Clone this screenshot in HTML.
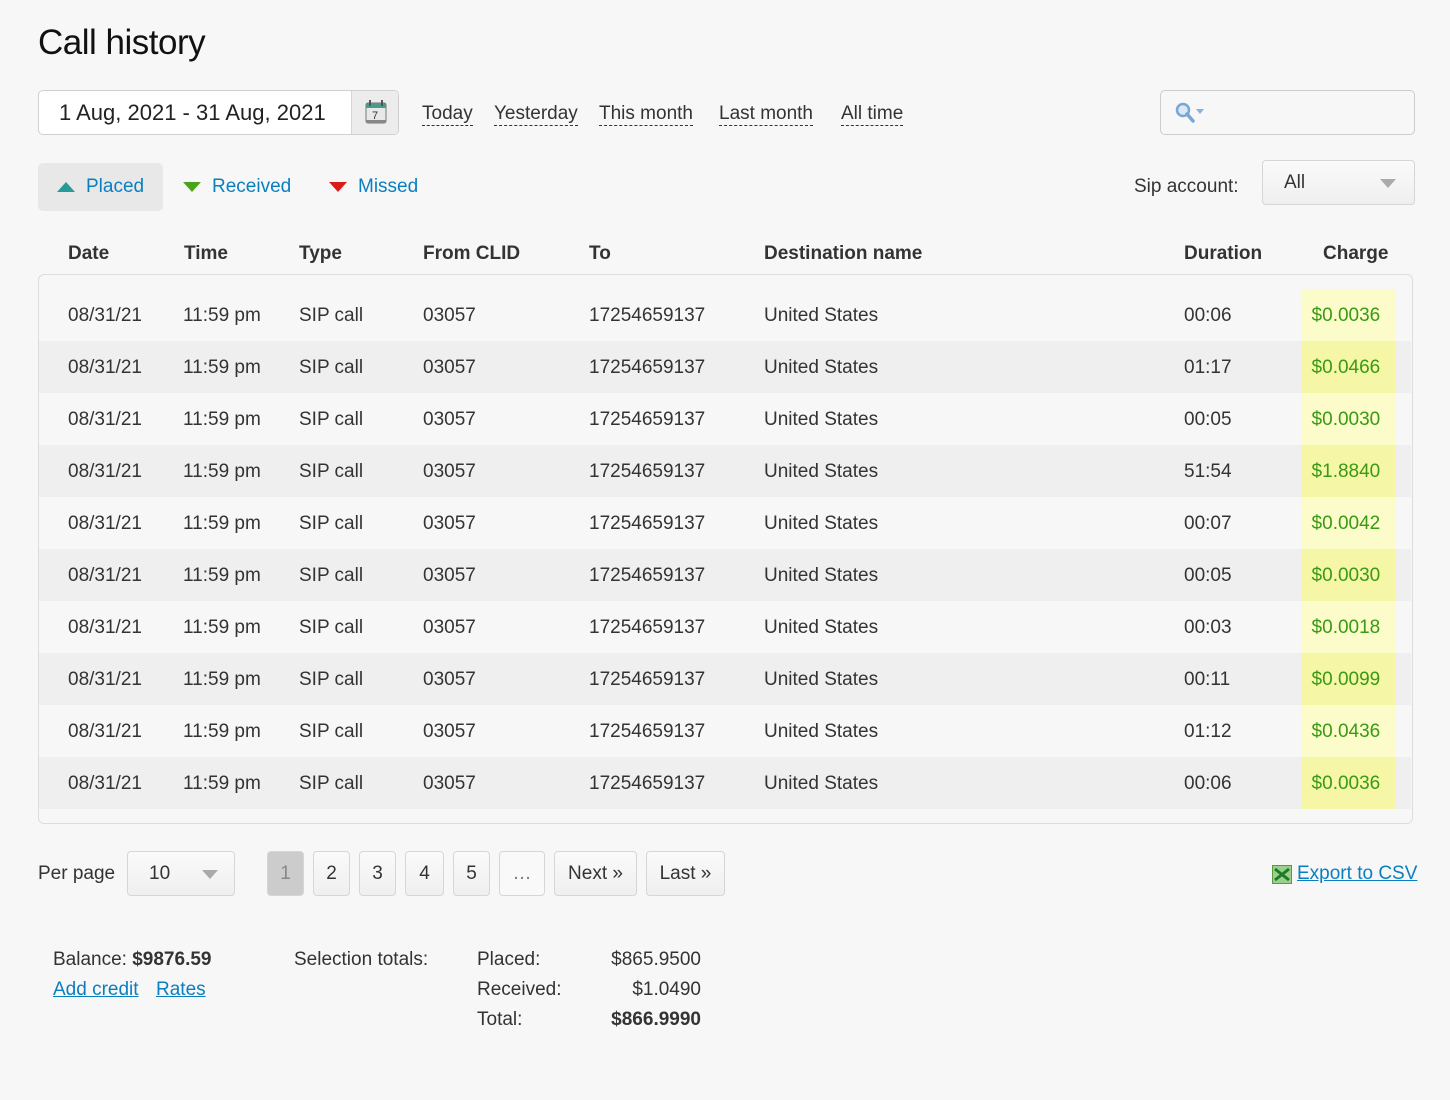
<!DOCTYPE html>
<html><head><meta charset="utf-8"><style>
*{box-sizing:border-box;margin:0;padding:0}
body{width:1450px;height:1100px;background:#f7f7f7;font-family:"Liberation Sans",sans-serif;color:#333;position:relative;overflow:hidden;font-size:19px}
.a{position:absolute;white-space:nowrap}
h1{position:absolute;left:38px;top:23px;font-size:35px;font-weight:normal;color:#111;letter-spacing:-0.5px}
.dl{border-bottom:1px dashed #333;line-height:22px}
.btn{position:absolute;border:1px solid #d6d6d6;border-radius:4px;background:linear-gradient(#fafafa,#efefef);text-align:center;height:45px;line-height:43px;top:851px}
.link{color:#0a7fc0;text-decoration:underline}
table{position:absolute;left:39px;top:289px;width:1372px;border-collapse:collapse}
td{height:52px;padding:0;padding-top:2px;font-size:19px;color:#333}
tr:nth-child(odd){background:#f7f7f7}
tr:nth-child(even){background:#efefef}
td.c{color:#3a9a14}
tr:nth-child(odd) td.c{background:#fbfcc9}
tr:nth-child(even) td.c{background:#f5f7a6}
</style></head><body>
<h1>Call history</h1>
<div class="a" style="left:38px;top:90px;width:361px;height:45px;border:1px solid #d0d0d0;border-radius:5px;background:#fff"></div>
<div class="a" style="left:351px;top:91px;width:47px;height:43px;border-left:1px solid #d6d6d6;background:#ececec;border-radius:0 5px 5px 0"></div>
<svg class="a" style="left:364px;top:99px" width="24" height="26" viewBox="0 0 24 26"><rect x="2" y="4" width="20" height="20" rx="2" fill="#e8e8e8" stroke="#777"/><rect x="2" y="4" width="20" height="5" fill="#4a9a8a"/><rect x="5" y="1" width="2" height="6" fill="#555"/><rect x="17" y="1" width="2" height="6" fill="#555"/><text x="8" y="20" font-size="11" font-family="Liberation Sans" fill="#333">7</text><rect x="2" y="21" width="20" height="3" fill="#888"/></svg>
<div class="a" style="left:59px;top:100px;font-size:22px;color:#222">1 Aug, 2021 - 31 Aug, 2021</div>
<div class="a dl" style="left:422px;top:103px">Today</div>
<div class="a dl" style="left:494px;top:103px">Yesterday</div>
<div class="a dl" style="left:599px;top:103px">This month</div>
<div class="a dl" style="left:719px;top:103px">Last month</div>
<div class="a dl" style="left:841px;top:103px">All time</div>
<div class="a" style="left:1160px;top:90px;width:255px;height:45px;border:1px solid #ccc;border-radius:5px;background:#f7f7f7"></div>
<svg class="a" style="left:1174px;top:101px" width="34" height="24" viewBox="0 0 34 24"><circle cx="9" cy="9" r="6" fill="#dbe8f5" stroke="#7aa6d6" stroke-width="2.5"/><line x1="13" y1="13" x2="19" y2="20" stroke="#7aa6d6" stroke-width="3.5" stroke-linecap="round"/><path d="M22 8h8l-4 5z" fill="#8ab0d8"/></svg>
<div class="a" style="left:38px;top:163px;width:125px;height:48px;background:#e8e8e8;border-radius:5px"></div>
<svg class="a" style="left:57px;top:181px" width="18" height="12"><path d="M0 11L9 1L18 11Z" fill="#2a9a96"/></svg>
<div class="a" style="left:86px;top:176px;color:#0a7fc0">Placed</div>
<svg class="a" style="left:183px;top:181px" width="18" height="12"><path d="M0 1L18 1L9 11Z" fill="#4aa417"/></svg>
<div class="a" style="left:212px;top:176px;color:#0a7fc0">Received</div>
<svg class="a" style="left:329px;top:181px" width="18" height="12"><path d="M0 1L18 1L9 11Z" fill="#dd1a1a"/></svg>
<div class="a" style="left:358px;top:176px;color:#0a7fc0">Missed</div>
<div class="a" style="left:1134px;top:176px">Sip account:</div>
<div class="a" style="left:1262px;top:160px;width:153px;height:45px;border:1px solid #d6d6d6;border-radius:4px;background:linear-gradient(#fafafa,#efefef)"></div>
<div class="a" style="left:1284px;top:172px">All</div>
<svg class="a" style="left:1380px;top:179px" width="16" height="10"><path d="M0 0H16L8 9Z" fill="#aaa"/></svg>
<div class="a" style="left:68px;top:243px;font-weight:bold">Date</div>
<div class="a" style="left:184px;top:243px;font-weight:bold">Time</div>
<div class="a" style="left:299px;top:243px;font-weight:bold">Type</div>
<div class="a" style="left:423px;top:243px;font-weight:bold">From CLID</div>
<div class="a" style="left:589px;top:243px;font-weight:bold">To</div>
<div class="a" style="left:764px;top:243px;font-weight:bold">Destination name</div>
<div class="a" style="left:1184px;top:243px;font-weight:bold">Duration</div>
<div class="a" style="left:1323px;top:243px;font-weight:bold">Charge</div>
<div class="a" style="left:38px;top:274px;width:1375px;height:550px;border:1px solid #ddd;border-radius:6px;background:#f7f7f7"></div>
<table>
<colgroup><col style="width:29px"><col style="width:115px"><col style="width:116px"><col style="width:124px"><col style="width:166px"><col style="width:175px"><col style="width:420px"><col style="width:117px"><col style="width:95px"><col></colgroup>
<tr><td></td><td>08/31/21</td><td>11:59 pm</td><td>SIP call</td><td>03057</td><td>17254659137</td><td>United States</td><td>00:06</td><td class="c">&nbsp;&nbsp;$0.0036</td><td></td></tr>
<tr><td></td><td>08/31/21</td><td>11:59 pm</td><td>SIP call</td><td>03057</td><td>17254659137</td><td>United States</td><td>01:17</td><td class="c">&nbsp;&nbsp;$0.0466</td><td></td></tr>
<tr><td></td><td>08/31/21</td><td>11:59 pm</td><td>SIP call</td><td>03057</td><td>17254659137</td><td>United States</td><td>00:05</td><td class="c">&nbsp;&nbsp;$0.0030</td><td></td></tr>
<tr><td></td><td>08/31/21</td><td>11:59 pm</td><td>SIP call</td><td>03057</td><td>17254659137</td><td>United States</td><td>51:54</td><td class="c">&nbsp;&nbsp;$1.8840</td><td></td></tr>
<tr><td></td><td>08/31/21</td><td>11:59 pm</td><td>SIP call</td><td>03057</td><td>17254659137</td><td>United States</td><td>00:07</td><td class="c">&nbsp;&nbsp;$0.0042</td><td></td></tr>
<tr><td></td><td>08/31/21</td><td>11:59 pm</td><td>SIP call</td><td>03057</td><td>17254659137</td><td>United States</td><td>00:05</td><td class="c">&nbsp;&nbsp;$0.0030</td><td></td></tr>
<tr><td></td><td>08/31/21</td><td>11:59 pm</td><td>SIP call</td><td>03057</td><td>17254659137</td><td>United States</td><td>00:03</td><td class="c">&nbsp;&nbsp;$0.0018</td><td></td></tr>
<tr><td></td><td>08/31/21</td><td>11:59 pm</td><td>SIP call</td><td>03057</td><td>17254659137</td><td>United States</td><td>00:11</td><td class="c">&nbsp;&nbsp;$0.0099</td><td></td></tr>
<tr><td></td><td>08/31/21</td><td>11:59 pm</td><td>SIP call</td><td>03057</td><td>17254659137</td><td>United States</td><td>01:12</td><td class="c">&nbsp;&nbsp;$0.0436</td><td></td></tr>
<tr><td></td><td>08/31/21</td><td>11:59 pm</td><td>SIP call</td><td>03057</td><td>17254659137</td><td>United States</td><td>00:06</td><td class="c">&nbsp;&nbsp;$0.0036</td><td></td></tr>
</table>
<div class="a" style="left:38px;top:863px">Per page</div>
<div class="btn" style="left:127px;width:108px;text-align:left;padding-left:21px">10</div>
<svg class="a" style="left:202px;top:870px" width="16" height="10"><path d="M0 0H16L8 9Z" fill="#aaa"/></svg>
<div class="btn" style="left:267px;width:37px;background:#ccc;color:#888">1</div>
<div class="btn" style="left:313px;width:37px">2</div>
<div class="btn" style="left:359px;width:37px">3</div>
<div class="btn" style="left:405px;width:39px">4</div>
<div class="btn" style="left:453px;width:37px">5</div>
<div class="btn" style="left:499px;width:46px;background:#f9f9f9;color:#777">…</div>
<div class="btn" style="left:554px;width:83px">Next »</div>
<div class="btn" style="left:646px;width:79px">Last »</div>
<svg class="a" style="left:1272px;top:865px" width="20" height="19"><rect x="0.5" y="0.5" width="19" height="18" fill="#9cd08a" stroke="#5a9a44"/><path d="M3 4L17 15M17 4L3 15" stroke="#1e7a28" stroke-width="3"/></svg>
<div class="a link" style="left:1297px;top:863px">Export to CSV</div>
<div class="a" style="left:53px;top:949px">Balance: <b>$9876.59</b></div>
<div class="a link" style="left:53px;top:979px">Add credit</div>
<div class="a link" style="left:156px;top:979px">Rates</div>
<div class="a" style="left:294px;top:949px">Selection totals:</div>
<div class="a" style="left:477px;top:949px">Placed:</div>
<div class="a" style="left:477px;top:979px">Received:</div>
<div class="a" style="left:477px;top:1009px">Total:</div>
<div class="a" style="left:560px;width:141px;text-align:right;top:949px">$865.9500</div>
<div class="a" style="left:560px;width:141px;text-align:right;top:979px">$1.0490</div>
<div class="a" style="left:560px;width:141px;text-align:right;top:1009px;font-weight:bold">$866.9990</div>
</body></html>
